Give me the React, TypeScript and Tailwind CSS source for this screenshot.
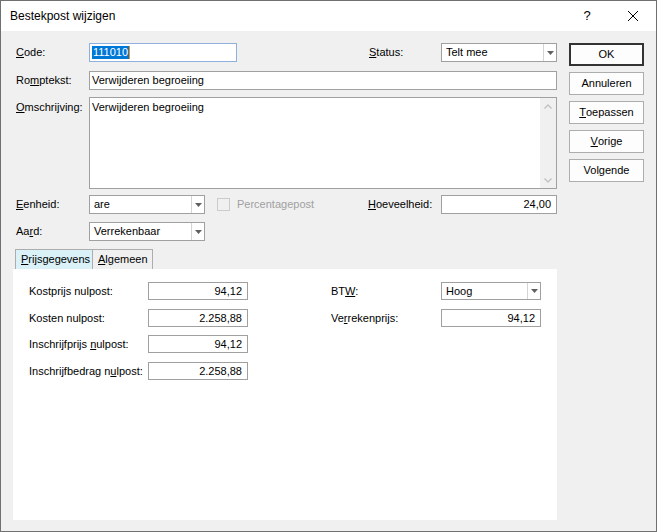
import React from 'react';

const font = "font-['Liberation_Sans',Arial,sans-serif]";

type BoxProps = {
  w: string;
  h?: string;
  right?: boolean;
  focus?: boolean;
  children?: React.ReactNode;
};

function TextBox({ w, h = 'h-[19px]', right, focus, children }: BoxProps) {
  return (
    <div
      className={`${w} ${h} flex items-center bg-white border ${
        focus ? 'border-[#8fb0de]' : 'border-[#a0a0a0]'
      } ${right ? 'justify-end pr-[5px]' : 'pl-[2px]'} text-[11px] text-black`}
    >
      {children}
    </div>
  );
}

function Arrow() {
  return (
    <svg width="7" height="4" viewBox="0 0 7 4">
      <path d="M0 0h7L3.5 4z" fill="#606060" />
    </svg>
  );
}

function Combo({ w, h = 'h-[19px]', children }: BoxProps) {
  return (
    <div className={`${w} ${h} flex bg-white border border-[#a0a0a0] text-[11px] text-black`}>
      <div className="flex-1 flex items-center pl-[4px]">{children}</div>
      <div className="w-[13px] border-l border-[#d4d4d4] flex items-center justify-center">
        <Arrow />
      </div>
    </div>
  );
}

function Lbl({ w, className = '', children }: { w: string; className?: string; children: React.ReactNode }) {
  return <div className={`${w} ${className} text-[11px] text-black shrink-0`}>{children}</div>;
}

function Btn({ children, primary }: { children: React.ReactNode; primary?: boolean }) {
  return (
    <div
      className={`w-[75px] h-[23px] flex items-center justify-center bg-[#fdfdfd] text-[11px] text-black border ${
        primary ? 'border-[#333333] shadow-[inset_0_0_0_1px_#333333]' : 'border-[#adadad]'
      }`}
    >
      {children}
    </div>
  );
}

export default function App() {
  return (
    <div className={`${font} w-[657px] h-[532px] border border-[#707070] bg-[#f0f0f0] flex flex-col`}>
      {/* title bar */}
      <div className="h-[30px] bg-white flex items-center shrink-0">
        <div className="pl-[9px] text-[12px] text-black">Bestekpost wijzigen</div>
        <div className="ml-auto flex h-full">
          <div className="w-[46px] flex items-center justify-center text-[13px] text-black">?</div>
          <div className="w-[46px] flex items-center justify-center">
            <svg width="10" height="10" viewBox="0 0 10 10">
              <path d="M0 0L10 10M10 0L0 10" stroke="#000" strokeWidth="1" />
            </svg>
          </div>
        </div>
      </div>

      <div className="flex flex-1">
        {/* left part */}
        <div className="w-[556px] pl-[12px] pt-[12px] flex flex-col">
          <div className="flex items-center h-[19px]">
            <Lbl w="w-[76px]" className="pl-[3px]">
              <u>C</u>ode:
            </Lbl>
            <TextBox w="w-[148px]" focus>
              <span className="bg-[#0078d7] text-white leading-[13px] px-[1px] border-r border-[#ff8c00]">111010</span>
            </TextBox>
            <div className="w-[132px]" />
            <Lbl w="w-[72px]">
              <u>S</u>tatus:
            </Lbl>
            <Combo w="w-[116px]">Telt mee</Combo>
          </div>

          <div className="flex items-center h-[19px] mt-[9px]">
            <Lbl w="w-[76px]" className="pl-[3px]">
              Ro<u>m</u>ptekst:
            </Lbl>
            <TextBox w="w-[468px]">Verwijderen begroeiing</TextBox>
          </div>

          <div className="flex mt-[7px]">
            <Lbl w="w-[76px]" className="pl-[3px] pt-[2px]">
              <u>O</u>mschrijving:
            </Lbl>
            <div className="w-[468px] h-[92px] flex bg-white border border-[#a0a0a0] text-[11px] text-black">
              <div className="flex-1 pl-[2px] pt-[1px]">Verwijderen begroeiing</div>
              <div className="w-[16px] bg-[#f0f0f0] flex flex-col items-center justify-between pt-[6px] pb-[5px]">
                <svg width="8" height="5" viewBox="0 0 8 5">
                  <path d="M0.5 4.5L4 1L7.5 4.5" fill="none" stroke="#c2c2c2" strokeWidth="1.4" />
                </svg>
                <svg width="8" height="5" viewBox="0 0 8 5">
                  <path d="M0.5 0.5L4 4L7.5 0.5" fill="none" stroke="#c2c2c2" strokeWidth="1.4" />
                </svg>
              </div>
            </div>
          </div>

          <div className="flex items-center h-[19px] mt-[6px]">
            <Lbl w="w-[76px]" className="pl-[3px]">
              <u>E</u>enheid:
            </Lbl>
            <Combo w="w-[116px]">are</Combo>
            <div className="ml-[12px] w-[13px] h-[13px] border border-[#cccccc]" />
            <div className="ml-[7px] text-[11px] text-[#a0a0a0]">Percentagepost</div>
            <div className="flex-1" />
            <Lbl w="w-[73px]">
              <u>H</u>oeveelheid:
            </Lbl>
            <TextBox w="w-[116px]" right>
              24,00
            </TextBox>
          </div>

          <div className="flex items-center h-[19px] mt-[8px]">
            <Lbl w="w-[76px]" className="pl-[3px]">
              Aa<u>r</u>d:
            </Lbl>
            <Combo w="w-[116px]">Verrekenbaar</Combo>
          </div>

          {/* tabs */}
          <div className="flex mt-[8px] pl-[2px] h-[20px] text-[11px] text-black">
            <div className="w-[78px] border border-b-0 border-[#adadad] bg-[#d9f1f7] flex items-center pl-[5px]">
              <u>P</u>rijsgegevens
            </div>
            <div className="w-[60px] border border-l-0 border-b-0 border-[#adadad] flex items-center pl-[5px]">
              <u>A</u>lgemeen
            </div>
          </div>
          <div className="w-[544px] h-[251px] bg-white pl-[16px] pt-[13px] flex">
            <div className="flex flex-col">
              <div className="flex items-center h-[18px]">
                <Lbl w="w-[119px]">Kostprijs nulpost:</Lbl>
                <TextBox w="w-[100px]" h="h-[18px]" right>
                  94,12
                </TextBox>
              </div>
              <div className="flex items-center h-[18px] mt-[9px]">
                <Lbl w="w-[119px]">Kosten nulpost:</Lbl>
                <TextBox w="w-[100px]" h="h-[18px]" right>
                  2.258,88
                </TextBox>
              </div>
              <div className="flex items-center h-[18px] mt-[8px]">
                <Lbl w="w-[119px]">
                  Inschrijfprijs <u>n</u>ulpost:
                </Lbl>
                <TextBox w="w-[100px]" h="h-[18px]" right>
                  94,12
                </TextBox>
              </div>
              <div className="flex items-center h-[18px] mt-[9px]">
                <Lbl w="w-[119px]">
                  Inschrijfbedrag n<u>u</u>lpost:
                </Lbl>
                <TextBox w="w-[100px]" h="h-[18px]" right>
                  2.258,88
                </TextBox>
              </div>
            </div>
            <div className="flex flex-col ml-[83px]">
              <div className="flex items-center h-[18px]">
                <Lbl w="w-[110px]">
                  BT<u>W</u>:
                </Lbl>
                <Combo w="w-[100px]" h="h-[18px]">
                  Hoog
                </Combo>
              </div>
              <div className="flex items-center h-[18px] mt-[9px]">
                <Lbl w="w-[110px]">
                  Ve<u>r</u>rekenprijs:
                </Lbl>
                <TextBox w="w-[100px]" h="h-[18px]" right>
                  94,12
                </TextBox>
              </div>
            </div>
          </div>
        </div>

        {/* buttons */}
        <div className="pl-[12px] pt-[12px] flex flex-col gap-[6px]">
          <Btn primary>OK</Btn>
          <Btn>Annuleren</Btn>
          <Btn>
            <u>T</u>oepassen
          </Btn>
          <Btn>
            <u>V</u>orige
          </Btn>
          <Btn>
            Vol<u>g</u>ende
          </Btn>
        </div>
      </div>
    </div>
  );
}
